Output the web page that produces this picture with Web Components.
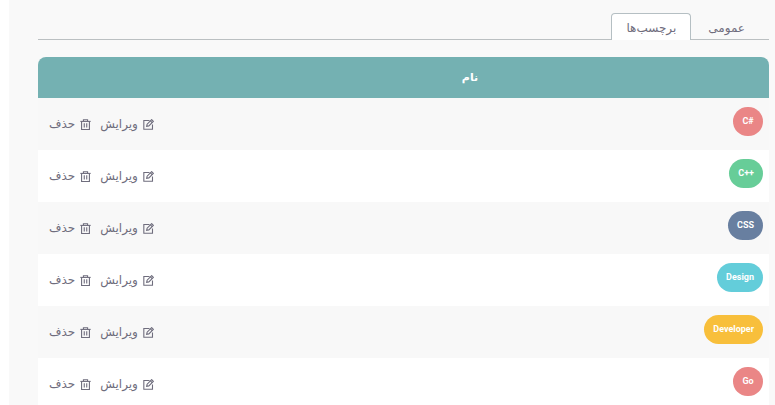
<!DOCTYPE html>
<html lang="fa" dir="rtl">
<head>
<meta charset="UTF-8">
<meta name="viewport" content="width=device-width, initial-scale=1">
<title>برچسب‌ها</title>
<style>
    html {
        background: #fff;
        overflow: hidden;
    }
    body {
        margin: 0;
        font-family: "DejaVu Sans", sans-serif;
        font-size: 12px;
        line-height: 20px;
        color: #6f6d7d;
    }
</style>
</head>
<body>
<settings-panel>
    <tab-bar slot="tabs">
        <tab-item>عمومی</tab-item>
        <tab-item active>برچسب‌ها</tab-item>
    </tab-bar>
    <tag-table></tag-table>
</settings-panel>

<script>
/**
 * SettingsPanel - grey page area with a tab bar on top and content below
 */
class SettingsPanel extends HTMLElement {
    constructor() {
        super();
        this.attachShadow({ mode: 'open' });
        this.shadowRoot.innerHTML = `
            <style>
                :host {
                    display: block;
                    box-sizing: border-box;
                    min-height: 100vh;
                    margin-left: 9px;
                    padding: 13px 6px 0 29px;
                    background: #f9f9f9;
                }
                main {
                    margin-top: 17px;
                }
            </style>
            <slot name="tabs"></slot>
            <main><slot></slot></main>
        `;
    }
}

/**
 * TabBar - row of tabs standing on a line
 */
class TabBar extends HTMLElement {
    constructor() {
        super();
        this.attachShadow({ mode: 'open' });
        this.shadowRoot.innerHTML = `
            <style>
                :host {
                    display: block;
                }
                nav {
                    display: flex;
                    gap: 2px;
                    padding-right: 9px;
                    box-shadow: inset 0 -1px #bbc0c2;
                }
            </style>
            <nav><slot></slot></nav>
        `;
    }
}

class TabItem extends HTMLElement {
    constructor() {
        super();
        this.attachShadow({ mode: 'open' });
        this.shadowRoot.innerHTML = `
            <style>
                :host {
                    display: block;
                }
                a {
                    display: block;
                    padding: 4px 14px 2px;
                    border: 1px solid transparent;
                    border-bottom: 0;
                    border-radius: 4px 4px 0 0;
                    color: inherit;
                    text-decoration: none;
                }
                :host([active]) a {
                    background: #fff;
                    border-color: #b5bfc3;
                }
            </style>
            <a href="#"><slot></slot></a>
        `;
    }
}

/**
 * TagBadge - coloured pill, colour comes from the "color" attribute
 */
class TagBadge extends HTMLElement {
    constructor() {
        super();
        this.attachShadow({ mode: 'open' });
    }

    connectedCallback() {
        const color = this.getAttribute('color') || '#ea8686';
        this.shadowRoot.innerHTML = `
            <style>
                :host {
                    display: inline-block;
                    box-sizing: border-box;
                    min-width: 30px;
                    vertical-align: top;
                    padding: 0 9px;
                    border-radius: 15px;
                    background: ${color};
                    color: #fff;
                    font: bold 9px/29px Roboto, sans-serif;
                    text-align: center;
                    direction: ltr;
                }
            </style>
            <slot></slot>
        `;
    }
}

const ICONS = {
    edit: `
        <path d="M9.5 2.2H1.2v12.6h12.6V8"/>
        <path d="M5.3 10.7l.7-3.2 6.6-6.6 2.5 2.5-6.6 6.6z"/>
        <path d="M10.8 2.7l2.5 2.5"/>`,
    trash: `
        <path d="M.5 3.5h15"/>
        <path d="M5 3.5V1h6v2.5"/>
        <path d="M2.3 3.5v11.7h11.4V3.5"/>
        <path d="M6.2 6.2v6.3M9.8 6.2v6.3"/>`
};

/**
 * IconButton - flat button with an icon before its label
 */
class IconButton extends HTMLElement {
    constructor() {
        super();
        this.attachShadow({ mode: 'open' });
    }

    connectedCallback() {
        const icon = ICONS[this.getAttribute('icon')] || '';
        this.shadowRoot.innerHTML = `
            <style>
                :host {
                    display: block;
                }
                button {
                    display: flex;
                    align-items: center;
                    gap: 5px;
                    padding: 0;
                    border: 0;
                    background: none;
                    color: inherit;
                    font: inherit;
                    cursor: pointer;
                }
                svg {
                    width: 11px;
                    height: 11px;
                    fill: none;
                    stroke: currentColor;
                    stroke-width: 1.6;
                }
            </style>
            <button type="button">
                <svg viewBox="0 0 16 16" aria-hidden="true">${icon}</svg>
                <slot></slot>
            </button>
        `;
    }
}

const TAGS = [
    { name: 'C#', color: '#ea8686' },
    { name: 'C++', color: '#67cd98' },
    { name: 'CSS', color: '#687fa0' },
    { name: 'Design', color: '#63cdda' },
    { name: 'Developer', color: '#f8bf3b' },
    { name: 'Go', color: '#ea8686' }
];

/**
 * TagTable - list of tags with edit and delete actions
 */
class TagTable extends HTMLElement {
    constructor() {
        super();
        this.attachShadow({ mode: 'open' });
    }

    connectedCallback() {
        const rows = TAGS.map(tag => `
            <tr>
                <td><tag-badge color="${tag.color}">${tag.name}</tag-badge></td>
                <td>
                    <div class="actions">
                        <icon-button icon="edit">ویرایش</icon-button>
                        <icon-button icon="trash">حذف</icon-button>
                    </div>
                </td>
            </tr>
        `).join('');

        this.shadowRoot.innerHTML = `
            <style>
                :host {
                    display: block;
                }
                table {
                    width: 100%;
                    border-spacing: 0;
                    table-layout: fixed;
                }
                th {
                    height: 41px;
                    padding: 0;
                    background: #74b1b2;
                    color: #fff;
                    font-size: 11px;
                }
                th:first-child {
                    border-top-right-radius: 8px;
                }
                th:last-child {
                    width: 133px;
                    border-top-left-radius: 8px;
                }
                td {
                    height: 52px;
                    box-sizing: border-box;
                    padding: 9px 6px 14px 11px;
                    background: #fff;
                }
                tr:nth-child(odd) td {
                    background: #f8f8f8;
                }
                .actions {
                    display: flex;
                    justify-content: flex-end;
                    gap: 9px;
                    padding-top: 5px;
                }
            </style>
            <table>
                <thead>
                    <tr><th scope="col">نام</th><th></th></tr>
                </thead>
                <tbody>${rows}</tbody>
            </table>
        `;
    }
}

customElements.define('settings-panel', SettingsPanel);
customElements.define('tab-bar', TabBar);
customElements.define('tab-item', TabItem);
customElements.define('tag-badge', TagBadge);
customElements.define('icon-button', IconButton);
customElements.define('tag-table', TagTable);
</script>
</body>
</html>
